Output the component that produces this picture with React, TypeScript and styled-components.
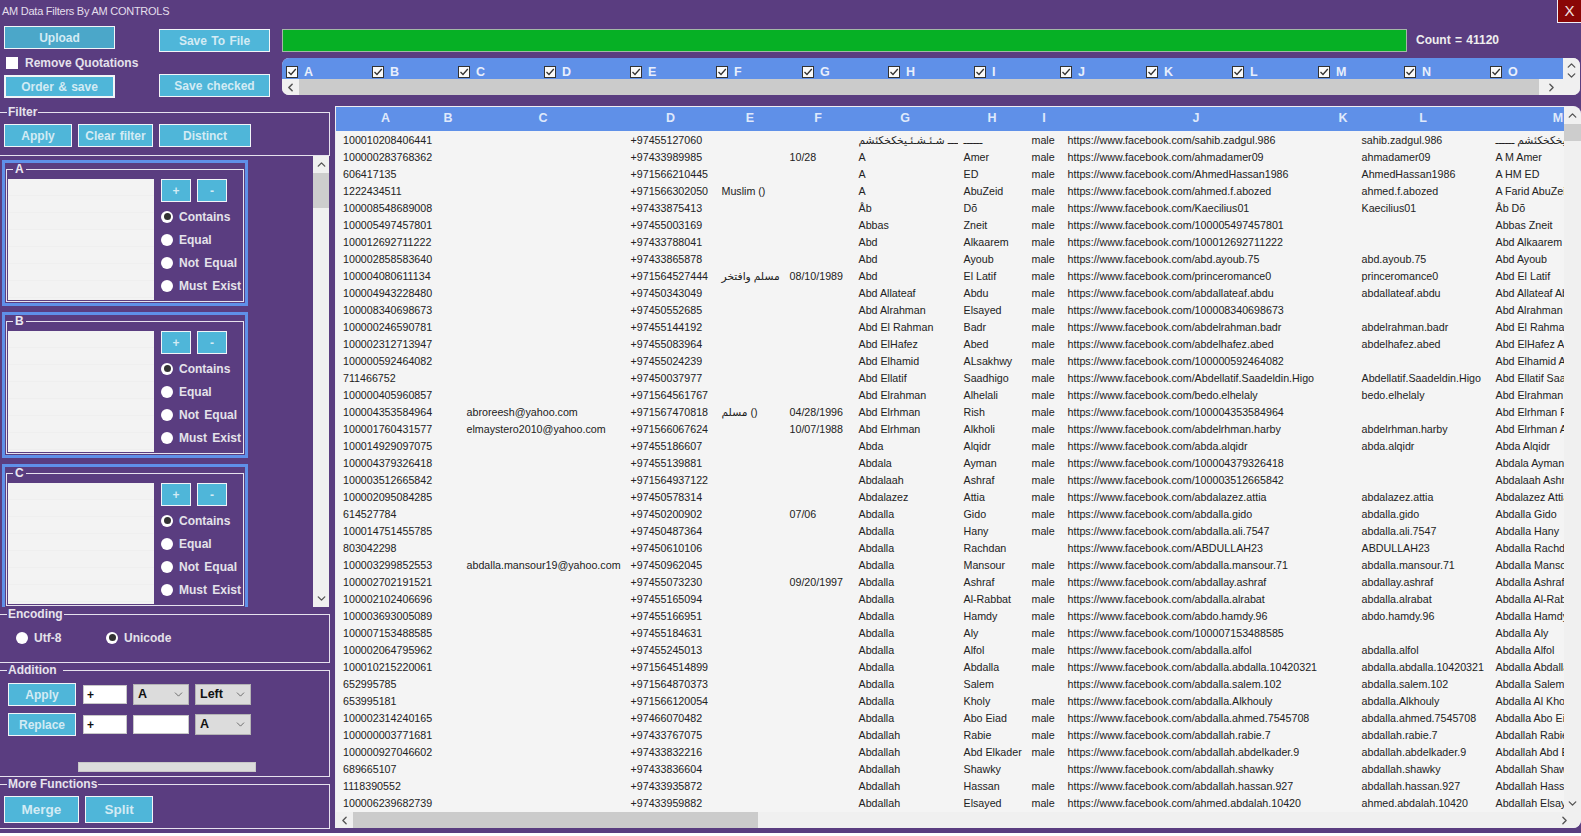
import React from "react";
import styled, { createGlobalStyle } from "styled-components";
import { ChevronUp, ChevronDown, ChevronLeft, ChevronRight } from "lucide-react";

const PURPLE = "#5a3d80";
const BLUE = "#5f90e8";
const CYAN = "#4fb6d9";
const LINE = "#e6e2ee";
const INK = "#222";
const FONT = `"Liberation Sans", "DejaVu Sans", sans-serif`;

const Global = createGlobalStyle`
  html, body { margin: 0; padding: 0; background: #fff; overflow: hidden; }
  * { box-sizing: border-box; }
`;

const Win = styled.div`
  width: 1581px; height: 833px; background: ${PURPLE}; color: #ece9f2;
  font-family: ${FONT}; display: flex; flex-direction: column; overflow: hidden;
`;
const TitleBar = styled.header`
  height: 22px; flex: none; display: flex; align-items: flex-start; justify-content: space-between;
`;
const Title = styled.h1`
  margin: 0; padding: 4px 0 0 2px; font-size: 11px; line-height: 14px; letter-spacing: -0.25px; font-weight: 400; color: #e4dfec;
`;
const Close = styled.button`
  width: 24px; height: 23px; padding: 0; background: #8a0606; color: #f3e4e4;
  border: 1px solid #f1eef5; border-width: 0 0 1px 1px; font: 400 15px/22px ${FONT};
`;
const TopBand = styled.section`
  height: 83px; flex: none; display: flex; padding-left: 4px;
`;
const LeftActions = styled.div`
  width: 111px; flex: none; display: flex; flex-direction: column; padding-top: 4px; margin-right: 44px;
`;
const MidActions = styled.div`
  width: 111px; flex: none; display: flex; flex-direction: column; justify-content: space-between;
  padding: 7px 0 8px; margin-right: 12px;
`;
const RightBlock = styled.div`
  flex: 1; min-width: 0; padding: 7px 1px 0 0;
`;
const Action = styled.button<{ $w: number; $h?: number; $tone?: string; $thick?: boolean; $size?: number }>`
  width: ${(p) => p.$w}px; height: ${(p) => p.$h ?? 23}px; flex: none; padding: 0;
  background: ${(p) => p.$tone ?? CYAN}; color: #d3ebf4;
  border: ${(p) => (p.$thick ? 2 : 1)}px solid #f2f5f8;
  font: 700 ${(p) => p.$size ?? 12}px/1 ${FONT}; word-spacing: 1px;
`;
const CheckRow = styled.label`
  height: 26px; display: flex; align-items: center; gap: 7px; padding: 1px 0 0 2px; white-space: nowrap;
  font-size: 12px; font-weight: 700; color: #e4e1ec;
`;
const WhiteBox = styled.span`
  width: 12px; height: 12px; background: #fff; flex: none; display: block;
`;
const ProgressRow = styled.div`
  display: flex; align-items: center; height: 23px;
`;
const Progress = styled.div`
  width: 1125px; height: 23px; background: #06b025; border: 1px solid #a4b8a8;
`;
const CountLabel = styled.span`
  margin: -1px 0 0 9px; font-size: 12px; font-weight: 700; word-spacing: 1px; color: #eee;
`;
const Strip = styled.div`
  margin-top: 6px; height: 37px; display: flex; border-radius: 7px; overflow: hidden; background: #f0f0f0;
`;
const StripMain = styled.div`
  flex: 1; min-width: 0; display: flex; flex-direction: column;
`;
const StripChecks = styled.div`
  height: 21px; flex: none; background: ${BLUE}; display: flex; align-items: flex-end; padding-left: 4px; overflow: hidden;
`;
const StripItem = styled.label`
  width: 86px; flex: none; display: flex; align-items: center; gap: 6px;
  font-size: 12.5px; font-weight: 700; color: #e8effc;
`;
const TickBox = styled.span`
  width: 12px; height: 12px; background: #fafafa; border: 1px solid #333; display: flex; flex: none;
`;
const HBar = styled.div<{ $h: number }>`
  height: ${(p) => p.$h}px; flex: none; display: flex; align-items: center; background: #f0f0f0; color: #555;
`;
const HEnd = styled.span<{ $w: number }>`
  width: ${(p) => p.$w}px; flex: none; display: flex; align-items: center; justify-content: center;
`;
const HThumb = styled.span<{ $w: number }>`
  width: ${(p) => p.$w}px; height: 100%; flex: none; background: #cbcbcb;
`;
const HRest = styled.span`
  flex: 1;
`;
const VBar = styled.div<{ $w: number }>`
  width: ${(p) => p.$w}px; flex: none; display: flex; flex-direction: column; background: #f0f0f0; color: #555;
`;
const VEnd = styled.span<{ $h: number }>`
  height: ${(p) => p.$h}px; flex: none; display: flex; align-items: center; justify-content: center;
`;
const VThumb = styled.span<{ $h: number }>`
  height: ${(p) => p.$h}px; flex: none; background: #cdcdcd;
`;
const VRest = styled.span`
  flex: 1;
`;
const MainBand = styled.main`
  flex: 1; min-height: 0; display: flex; gap: 5px;
`;
const Sidebar = styled.aside`
  width: 330px; flex: none; display: flex; flex-direction: column;
`;
const Group = styled.fieldset<{ $h: number }>`
  margin: 0; min-width: 0; width: 330px; height: ${(p) => p.$h}px; flex: none; padding: 0;
  border: 1px solid ${LINE}; border-left: none;
`;
const Legend = styled.legend<{ $gap?: number }>`
  margin-left: 7px; padding: 0 ${(p) => p.$gap ?? 1}px 0 1px; font-size: 12px; line-height: 14px; font-weight: 700; color: #e6e3ed;
`;
const GroupBody = styled.div<{ $top?: number; $left?: number }>`
  padding: ${(p) => p.$top ?? 5}px 0 0 ${(p) => p.$left ?? 4}px;
`;
const ButtonRow = styled.div<{ $gap: number }>`
  display: flex; gap: ${(p) => p.$gap}px; align-items: center;
`;
const FilterScroll = styled.div`
  height: 451px; flex: none; display: flex;
`;
const Cards = styled.div`
  width: 313px; flex: none; overflow: hidden; padding: 4px 0 0 2px; display: flex; flex-direction: column; gap: 6px;
`;
const Card = styled.div`
  width: 246px; height: 146px; flex: none; border: 3px solid ${BLUE}; padding: 0 1px 1px 1px;
`;
const CardSet = styled.fieldset`
  margin: 0; height: 100%; min-width: 0; border: 1px solid ${LINE}; padding: 4px 0 0 1px; display: flex; gap: 7px;
`;
const CardLegend = styled.legend`
  margin-left: 5px; padding: 0 2px; font-size: 12px; line-height: 12px; font-weight: 700; color: #ebe8f1;
`;
const ListArea = styled.div`
  width: 146px; height: 121px; flex: none;
  background: repeating-linear-gradient(to bottom, #f3f3f3 0, #f3f3f3 16px, #efefef 16px, #efefef 17px);
`;
const CardControls = styled.div`
  display: flex; flex-direction: column;
`;
const RadioStack = styled.div`
  margin-top: 3px; display: flex; flex-direction: column;
`;
const RadioRow = styled.label<{ $w?: number }>`
  height: 23px; display: flex; align-items: center; gap: 6px; width: ${(p) => (p.$w ? `${p.$w}px` : "auto")};
  font-size: 12px; font-weight: 700; color: #e4e2ea; word-spacing: 2px;
`;
const RadioDot = styled.span<{ $on?: boolean }>`
  width: 12px; height: 12px; border-radius: 50%; flex: none; background: #fff; display: flex; align-items: center; justify-content: center;
  &::after {
    content: ""; width: 7px; height: 7px; border-radius: 50%; background: ${(p) => (p.$on ? "#333" : "transparent")};
  }
`;
const EncodingRow = styled.div`
  display: flex;
`;
const AddRow = styled.div<{ $mb?: number }>`
  display: flex; align-items: center; height: 23px; margin-bottom: ${(p) => p.$mb ?? 7}px;
`;
const PlusInput = styled.input<{ $w: number; $ml: number }>`
  width: ${(p) => p.$w}px; height: 19px; margin-left: ${(p) => p.$ml}px; padding: 0 3px; flex: none;
  background: #fff; border: 1px solid #c8c8c8; border-radius: 0; color: #111; font: 700 12px/1 ${FONT}; outline: none;
`;
const SelectBox = styled.div<{ $ml: number }>`
  width: 56px; height: 21px; margin-left: ${(p) => p.$ml}px; padding: 0 3px 0 4px; flex: none;
  display: flex; align-items: center; justify-content: space-between;
  background: #dcdcdc; border: 1px solid #b4b4b4; color: #111; font: 700 12.5px/1 ${FONT};
`;
const Meter = styled.div`
  width: 178px; height: 10px; margin: 26px 0 0 70px; background: #dcdcdc; border: 1px solid #c8c8c8;
`;
const TablePanel = styled.section`
  width: 1246px; height: 722px; margin-top: 1px; display: flex; flex-direction: column;
  background: #f4f4f4; border: solid #eeeef2; border-width: 1px 0 0 1px; border-radius: 0 8px 8px 0; overflow: hidden;
`;
const TableBody = styled.div`
  flex: 1; min-height: 0; display: flex;
`;
const Viewport = styled.div`
  flex: 1; min-width: 0; overflow: hidden;
`;
const Data = styled.table`
  table-layout: fixed; width: 1290px; border-collapse: separate; border-spacing: 0; font-size: 10.7px; color: ${INK};
`;
const Head = styled.th`
  height: 24px; padding: 0 0 3px; background: ${BLUE}; color: #dfe9fb; font-size: 12.5px; font-weight: 700; text-align: center;
`;
const Cell = styled.td`
  height: 17px; padding: 1px 0 0 5.5px; line-height: 16px; white-space: nowrap; overflow: hidden;
  &:first-child { padding-left: 7px; }
  &:nth-child(7) { padding-left: 6.5px; }
`;

const widths = [99, 26, 164, 91, 68, 68, 106, 68, 36, 268, 26, 134, 136];
const letters = "ABCDEFGHIJKLM".split("");
const stripLetters = "ABCDEFGHIJKLMNO".split("");

const raw = `100010208406441||+97455127060|||ــــــــ شـئـشـئـيخكخكئشم|ــــــ|male|sahib.zadgul.986|
100000283768362||+97433989985||10/28|A|Amer|male|ahmadamer09|A M Amer
606417135||+971566210445|||A|ED|male|AhmedHassan1986|A HM ED
1222434511||+971566302050|Muslim ()||A|AbuZeid|male|ahmed.f.abozed|A Farid AbuZeid
100008548689008||+97433875413|||Åb|Dõ|male|Kaecilius01|
100005497457801||+97455003169|||Abbas|Zneit|male|100005497457801|
100012692711222||+97433788041|||Abd|Alkaarem|male|100012692711222|
100002858583640||+97433865878|||Abd|Ayoub|male|abd.ayoub.75|
100004080611134||+971564527444|مسلم وافتخر|08/10/1989|Abd|El Latif|male|princeromance0|
100004943228480||+97450343049|||Abd Allateaf|Abdu|male|abdallateaf.abdu|
100008340698673||+97450552685|||Abd Alrahman|Elsayed|male|100008340698673|
100000246590781||+97455144192|||Abd El Rahman|Badr|male|abdelrahman.badr|
100002312713947||+97455083964|||Abd ElHafez|Abed|male|abdelhafez.abed|
100000592464082||+97455024239|||Abd Elhamid|ALsakhwy|male|100000592464082|
711466752||+97450037977|||Abd Ellatif|Saadhigo|male|Abdellatif.Saadeldin.Higo|
100000405960857||+971564561767|||Abd Elrahman|Alhelali|male|bedo.elhelaly|
100004353584964|abroreesh@yahoo.com|+971567470818|مسلم ()|04/28/1996|Abd Elrhman|Rish|male|100004353584964|
100001760431577|elmaystero2010@yahoo.com|+971566067624||10/07/1988|Abd Elrhman|Alkholi|male|abdelrhman.harby|
100014929097075||+97455186607|||Abda|Alqidr|male|abda.alqidr|
100004379326418||+97455139881|||Abdala|Ayman|male|100004379326418|
100003512665842||+971564937122|||Abdalaah|Ashraf|male|100003512665842|
100002095084285||+97450578314|||Abdalazez|Attia|male|abdalazez.attia|
614527784||+97450200902||07/06|Abdalla|Gido|male|abdalla.gido|
100014751455785||+97450487364|||Abdalla|Hany|male|abdalla.ali.7547|
803042298||+97450610106|||Abdalla|Rachdan||ABDULLAH23|
100003299852553|abdalla.mansour19@yahoo.com|+97450962045|||Abdalla|Mansour|male|abdalla.mansour.71|
100002702191521||+97455073230||09/20/1997|Abdalla|Ashraf|male|abdallay.ashraf|
100002102406696||+97455165094|||Abdalla|Al-Rabbat|male|abdalla.alrabat|
100003693005089||+97455166951|||Abdalla|Hamdy|male|abdo.hamdy.96|
100007153488585||+97455184631|||Abdalla|Aly|male|100007153488585|
100002064795962||+97455245013|||Abdalla|Alfol|male|abdalla.alfol|
100010215220061||+971564514899|||Abdalla|Abdalla|male|abdalla.abdalla.10420321|
652995785||+971564870373|||Abdalla|Salem||abdalla.salem.102|
653995181||+971566120054|||Abdalla|Kholy|male|abdalla.Alkhouly|Abdalla Al Kholy
100002314240165||+97466070482|||Abdalla|Abo Eiad|male|abdalla.ahmed.7545708|
100000003771681||+97433767075|||Abdallah|Rabie|male|abdallah.rabie.7|
100000927046602||+97433832216|||Abdallah|Abd Elkader|male|abdallah.abdelkader.9|
689665107||+97433836604|||Abdallah|Shawky||abdallah.shawky|
1118390552||+97433935872|||Abdallah|Hassan|male|abdallah.hassan.927|
100006239682739||+97433959882|||Abdallah|Elsayed|male|ahmed.abdalah.10420|`;

const rows = raw.split("\n").map((line) => {
  const [a, c, d, e, f, g, h, i, slug, m] = line.split("|");
  return [
    a, "", c, d, e, f, g, h, i,
    `https://www.facebook.com/${slug}`,
    "",
    /^\d+$/.test(slug) ? "" : slug,
    m || `${g} ${h}`,
  ];
});

const Tick = () => (
  <svg width="10" height="10" viewBox="0 0 10 10" fill="none" stroke="#333" strokeWidth="1.3">
    <path d="M1.5 5 L4 7.5 L8.8 2" />
  </svg>
);

const Radio = ({ label, on, w }: { label: string; on?: boolean; w?: number }) => (
  <RadioRow $w={w}>
    <RadioDot $on={on} />
    {label}
  </RadioRow>
);

const FilterCard = ({ name }: { name: string }) => (
  <Card>
    <CardSet>
      <CardLegend>{name}</CardLegend>
      <ListArea />
      <CardControls>
        <ButtonRow $gap={6}>
          <Action $w={30} $size={12}>+</Action>
          <Action $w={30} $size={12}>-</Action>
        </ButtonRow>
        <RadioStack>
          <Radio label="Contains" on />
          <Radio label="Equal" />
          <Radio label="Not Equal" />
          <Radio label="Must Exist" />
        </RadioStack>
      </CardControls>
    </CardSet>
  </Card>
);

const Select = ({ value, ml }: { value: string; ml: number }) => (
  <SelectBox $ml={ml}>
    {value}
    <ChevronDown size={13} strokeWidth={1.2} color="#333" />
  </SelectBox>
);

export default function App() {
  return (
    <Win>
      <Global />
      <TitleBar>
        <Title>AM Data Filters By AM CONTROLS</Title>
        <Close>X</Close>
      </TitleBar>
      <TopBand>
        <LeftActions>
          <Action $w={111} $tone="#4ba7c9">Upload</Action>
          <CheckRow>
            <WhiteBox />
            Remove Quotations
          </CheckRow>
          <Action $w={111} $thick>Order &amp; save</Action>
        </LeftActions>
        <MidActions>
          <Action $w={111}>Save To File</Action>
          <Action $w={111}>Save checked</Action>
        </MidActions>
        <RightBlock>
          <ProgressRow>
            <Progress />
            <CountLabel>Count = 41120</CountLabel>
          </ProgressRow>
          <Strip>
            <StripMain>
              <StripChecks>
                {stripLetters.map((l) => (
                  <StripItem key={l}>
                    <TickBox><Tick /></TickBox>
                    {l}
                  </StripItem>
                ))}
              </StripChecks>
              <HBar $h={16}>
                <HEnd $w={17}><ChevronLeft size={13} strokeWidth={3} /></HEnd>
                <HThumb $w={1240} />
                <HEnd $w={24}><ChevronRight size={13} strokeWidth={2.5} /></HEnd>
              </HBar>
            </StripMain>
            <VBar $w={17}>
              <VEnd $h={2} />
              <VEnd $h={10}><ChevronUp size={13} strokeWidth={2.5} /></VEnd>
              <VEnd $h={10}><ChevronDown size={13} strokeWidth={2.5} /></VEnd>
            </VBar>
          </Strip>
        </RightBlock>
      </TopBand>
      <MainBand>
        <Sidebar>
          <Group $h={51}>
            <Legend>Filter</Legend>
            <GroupBody>
              <ButtonRow $gap={6}>
                <Action $w={68}>Apply</Action>
                <Action $w={75}>Clear filter</Action>
                <Action $w={92}>Distinct</Action>
              </ButtonRow>
            </GroupBody>
          </Group>
          <FilterScroll>
            <Cards>
              <FilterCard name="A" />
              <FilterCard name="B" />
              <FilterCard name="C" />
            </Cards>
            <VBar $w={16}>
              <VEnd $h={17}><ChevronUp size={13} strokeWidth={2.5} /></VEnd>
              <VThumb $h={35} />
              <VRest />
              <VEnd $h={17}><ChevronDown size={13} strokeWidth={2.5} /></VEnd>
            </VBar>
          </FilterScroll>
          <Group $h={56}>
            <Legend>Encoding</Legend>
            <GroupBody $left={16}>
              <EncodingRow>
                <Radio label="Utf-8" w={90} />
                <Radio label="Unicode" on />
              </EncodingRow>
            </GroupBody>
          </Group>
          <Group $h={114}>
            <Legend $gap={6}>Addition</Legend>
            <GroupBody $top={6} $left={8}>
              <AddRow>
                <Action $w={68}>Apply</Action>
                <PlusInput $w={44} $ml={7} defaultValue="+" />
                <Select value="A" ml={6} />
                <Select value="Left" ml={6} />
              </AddRow>
              <AddRow $mb={0}>
                <Action $w={68}>Replace</Action>
                <PlusInput $w={44} $ml={7} defaultValue="+" />
                <PlusInput $w={56} $ml={6} defaultValue="" />
                <Select value="A" ml={6} />
              </AddRow>
              <Meter />
            </GroupBody>
          </Group>
          <Group $h={52}>
            <Legend>More Functions</Legend>
            <GroupBody>
              <ButtonRow $gap={6}>
                <Action $w={75} $h={27} $size={13.5}>Merge</Action>
                <Action $w={68} $h={27} $size={13.5}>Split</Action>
              </ButtonRow>
            </GroupBody>
          </Group>
        </Sidebar>
        <TablePanel>
          <TableBody>
            <Viewport>
              <Data>
                <colgroup>
                  {widths.map((w, i) => (
                    <col key={i} width={w} />
                  ))}
                </colgroup>
                <thead>
                  <tr>
                    {letters.map((l) => (
                      <Head key={l}>{l}</Head>
                    ))}
                  </tr>
                </thead>
                <tbody>
                  {rows.map((r, i) => (
                    <tr key={i}>
                      {r.map((v, j) => (
                        <Cell key={j}>{v}</Cell>
                      ))}
                    </tr>
                  ))}
                </tbody>
              </Data>
            </Viewport>
            <VBar $w={17}>
              <VEnd $h={17}><ChevronUp size={13} strokeWidth={2.5} /></VEnd>
              <VThumb $h={17} />
              <VRest />
              <VEnd $h={17}><ChevronDown size={13} strokeWidth={2.5} /></VEnd>
            </VBar>
          </TableBody>
          <HBar $h={16}>
            <HEnd $w={17}><ChevronLeft size={13} strokeWidth={2.5} /></HEnd>
            <HThumb $w={405} />
            <HRest />
            <HEnd $w={34}><ChevronRight size={13} strokeWidth={2.5} /></HEnd>
          </HBar>
        </TablePanel>
      </MainBand>
    </Win>
  );
}
